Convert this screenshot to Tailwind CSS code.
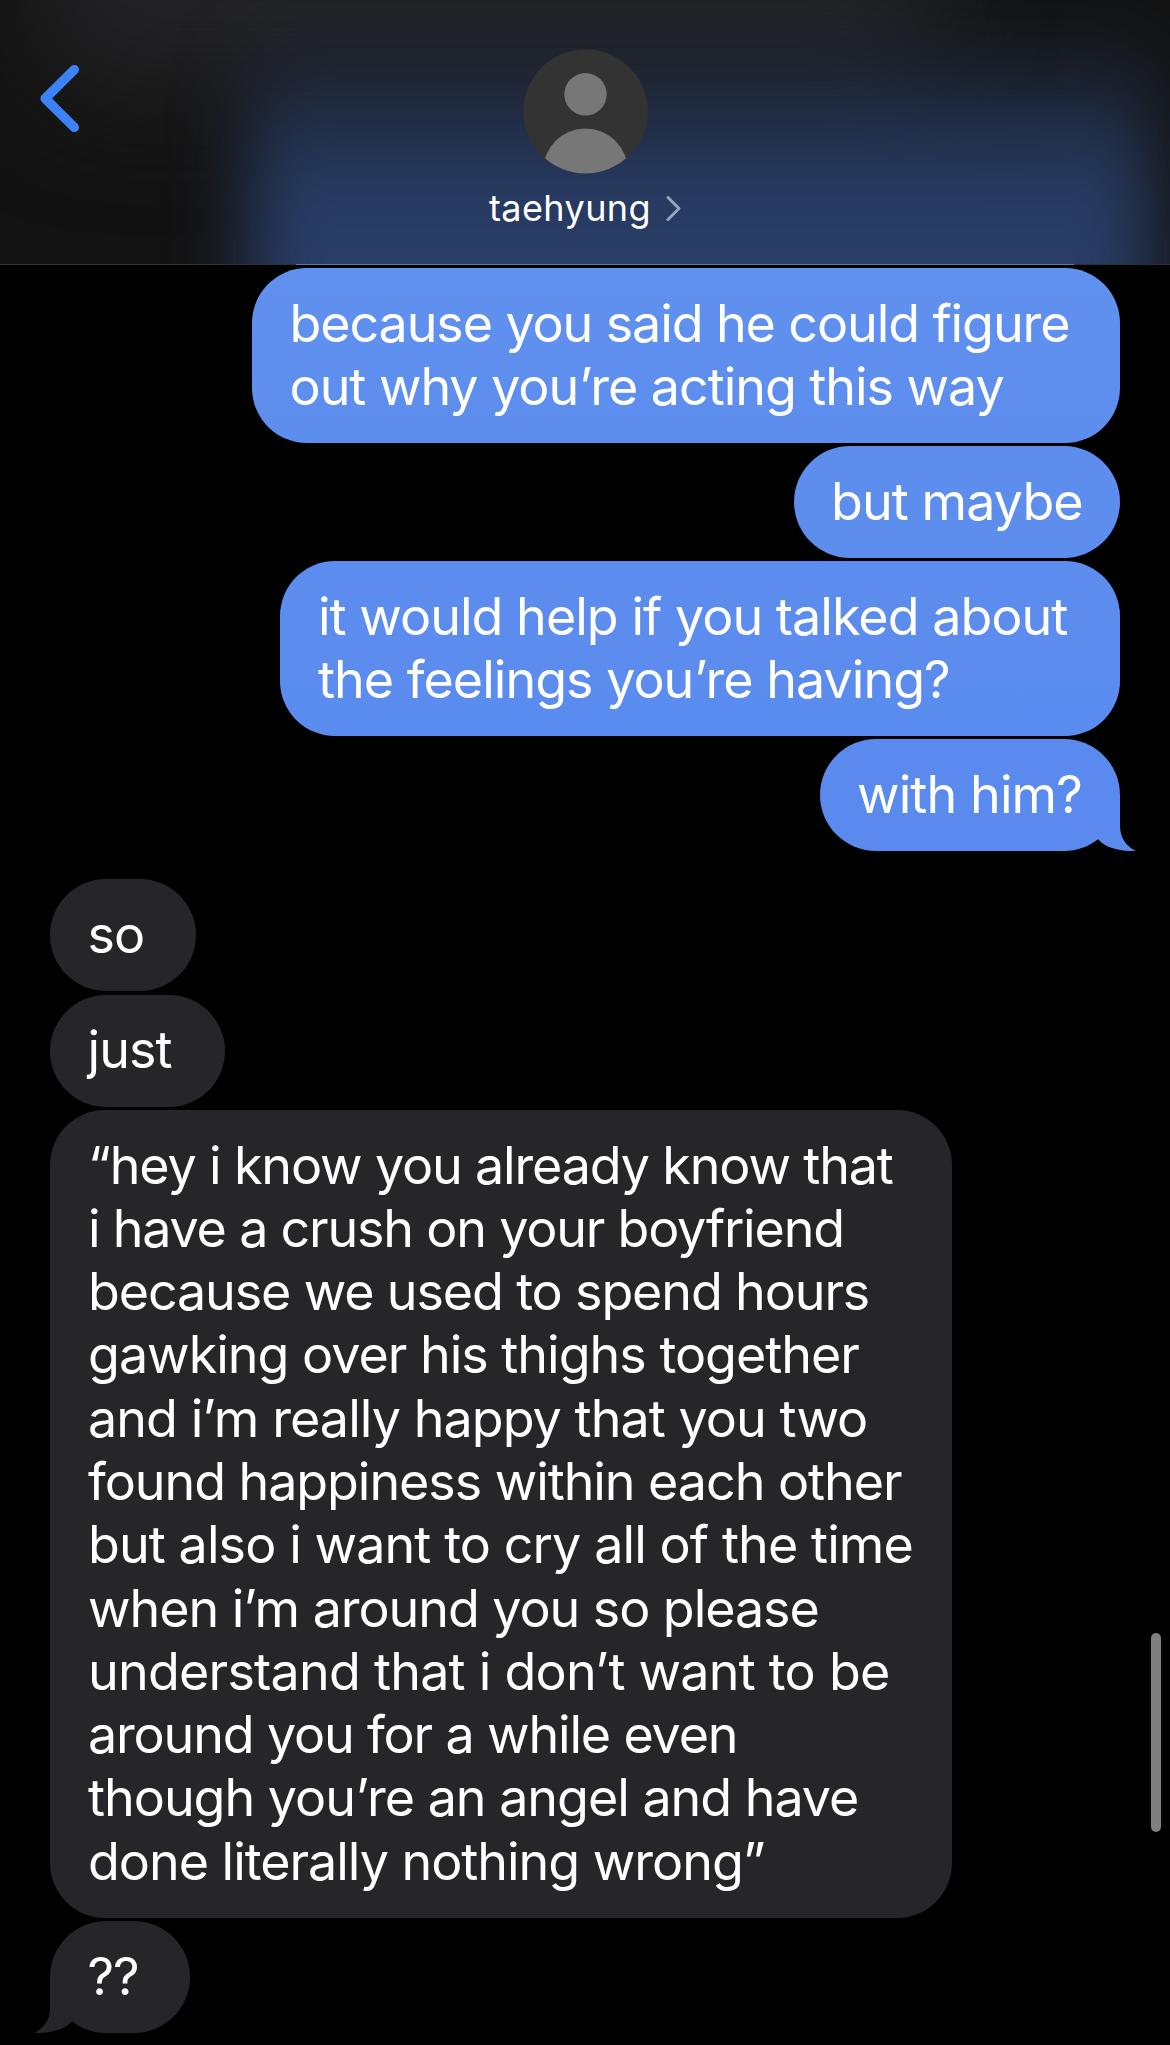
<!DOCTYPE html>
<html lang="en">
<head>
    <meta charset="UTF-8">
    <meta name="viewport" content="width=device-width, initial-scale=1.0">
    <title>Messages - taehyung</title>
    <!-- Tailwind CSS -->
    <script src="https://cdn.jsdelivr.net/npm/@tailwindcss/browser@4"></script>
</head>
<body class="bg-black">
    <div class="relative flex h-[2045px] w-[1170px] flex-col overflow-hidden bg-black font-['Inter','Liberation_Sans',sans-serif] text-white">
        <!-- Header -->
        <header class="relative h-[265px] shrink-0 overflow-hidden bg-[#131313]">
            <!-- Blurred messages behind the bar -->
            <div class="absolute -top-[120px] left-[50px] h-[250px] w-[880px] bg-[linear-gradient(to_bottom,#262629_0px,#262629_130px,#26262900_250px)] blur-[56px]"></div>
            <div class="absolute top-[10px] left-[248px] h-[490px] w-[904px] bg-[linear-gradient(to_bottom,#293d6600_0px,#293d6626_45px,#293d668c_100px,#293d66e6_160px,#293d66_210px,#293d66_490px)] blur-[36px]"></div>

            <div class="relative grid h-[264px] grid-cols-3 items-start">
                <!-- Back button -->
                <button class="mt-[60px] ml-[36px] h-[77px] w-[50px]" aria-label="Back">
                    <svg class="h-[77px] w-[50px]" viewBox="0 0 50 77" fill="none" stroke="#3b82f7" stroke-width="9.5" stroke-linecap="round" stroke-linejoin="round">
                        <path d="M38.3 9.7L9.2 38.5L38.3 67.3" />
                    </svg>
                </button>

                <!-- Contact -->
                <div class="flex flex-col items-center pt-[49px]">
                    <svg class="h-[125px] w-[125px]" viewBox="0 0 125 125">
                        <defs>
                            <clipPath id="avatar"><circle cx="62.5" cy="62.5" r="62" /></clipPath>
                        </defs>
                        <circle cx="62.5" cy="62.5" r="62.2" fill="#333333" />
                        <g clip-path="url(#avatar)" fill="#777777">
                            <circle cx="62.5" cy="45.3" r="21.2" />
                            <circle cx="62.5" cy="122" r="42.5" />
                        </g>
                    </svg>
                    <div class="mt-[12px] flex h-[44px] items-center gap-[15px]">
                        <span class="text-[36px] leading-[44px] tracking-[0.4px]">taehyung</span>
                        <svg class="mt-px h-[27px] w-[15px]" viewBox="0 0 15 27" fill="none" stroke="#98a3bd" stroke-width="3" stroke-linecap="round" stroke-linejoin="round">
                            <path d="M2 2.5L13 13.5L2 24.5" />
                        </svg>
                    </div>
                </div>
            </div>
            <div class="relative h-px bg-[#2e2e30] pl-[296px]">
                <div class="h-px w-[778px] bg-[#6475a3]"></div>
            </div>
        </header>

        <!-- Messages -->
        <main class="flex flex-1 flex-col pt-[3px] text-[52px] leading-[63.3px] whitespace-nowrap">
            <!-- Sent -->
            <div class="flex flex-col items-end gap-[3px] pr-[50px]">
                <div class="h-[175px] w-[868px] rounded-[55px] bg-linear-to-b from-[#6091ef] to-[#5d8eee] pt-[23.5px] pl-[37.5px]">
                    <p class="tracking-[-1.1px]">because you said he could figure</p>
                    <p class="tracking-[-1.04px]">out why you’re acting this way</p>
                </div>
                <div class="h-[112px] w-[326px] rounded-[56px] bg-[#5d8eee] pt-[23.5px] pl-[37px]">
                    <p class="tracking-[-0.9px]">but maybe</p>
                </div>
                <div class="h-[175px] w-[840px] rounded-[55px] bg-linear-to-b from-[#5c8dee] to-[#5a8bee] pt-[23.5px] pl-[38px]">
                    <p class="tracking-[-0.97px]">it would help if you talked about</p>
                    <p class="tracking-[-0.98px]">the feelings you’re having?</p>
                </div>
                <div class="relative h-[112px] w-[300px] rounded-[56px] bg-[#5a8aee] pt-[23.5px] pl-[37px]">
                    <p class="tracking-[-0.9px]">with him?</p>
                    <svg class="absolute -right-[16px] bottom-0 h-[56px] w-[56px]" viewBox="0 0 56 56" fill="#5a8aee">
                        <path d="M40 0V31C40 43 47 52 56 56C40 56.5 25 53 18.3 44.3L0 20V0Z" />
                    </svg>
                </div>
            </div>

            <!-- Received -->
            <div class="mt-[28px] flex flex-col items-start gap-[3px] pl-[50px]">
                <div class="h-[112px] w-[146px] rounded-[56px] bg-[#26252a] pt-[23.5px] pl-[37.5px]">
                    <p class="tracking-[-1px]">so</p>
                </div>
                <div class="mt-px h-[112px] w-[175px] rounded-[56px] bg-[#26252a] pt-[23px] pl-[37.5px]">
                    <p class="tracking-[-0.9px]">just</p>
                </div>
                <div class="h-[808px] w-[902px] rounded-[55px] bg-[#26252a] pt-[23.5px] pl-[38px]">
                    <p class="tracking-[-1.15px]">“hey i know you already know that</p>
                    <p class="tracking-[-1.2px]">i have a crush on your boyfriend</p>
                    <p class="tracking-[-1.13px]">because we used to spend hours</p>
                    <p class="tracking-[-1px]">gawking over his thighs together</p>
                    <p class="tracking-[-0.93px]">and i’m really happy that you two</p>
                    <p class="tracking-[-1.06px]">found happiness within each other</p>
                    <p class="tracking-[-0.9px]">but also i want to cry all of the time</p>
                    <p class="tracking-[-1.06px]">when i’m around you so please</p>
                    <p class="tracking-[-0.76px]">understand that i don’t want to be</p>
                    <p class="tracking-[-1.16px]">around you for a while even</p>
                    <p class="tracking-[-1.02px]">though you’re an angel and have</p>
                    <p class="tracking-[-1.02px]">done literally nothing wrong”</p>
                </div>
                <div class="relative h-[112px] w-[140px] rounded-[56px] bg-[#26252a] pt-[23.5px] pl-[37.5px]">
                    <p class="tracking-[-1px]">??</p>
                    <svg class="absolute bottom-0 -left-[16px] h-[56px] w-[56px]" viewBox="0 0 56 56" fill="#26252a">
                        <path d="M16 0V31C16 43 9 52 0 56C16 56.5 31 53 37.7 44.3L56 20V0Z" />
                    </svg>
                </div>
            </div>
        </main>

        <!-- Scrollbar -->
        <div class="absolute top-[1633px] right-[9px] h-[199px] w-[10px] rounded-full bg-[#7f7f7f]"></div>
    </div>
</body>
</html>
